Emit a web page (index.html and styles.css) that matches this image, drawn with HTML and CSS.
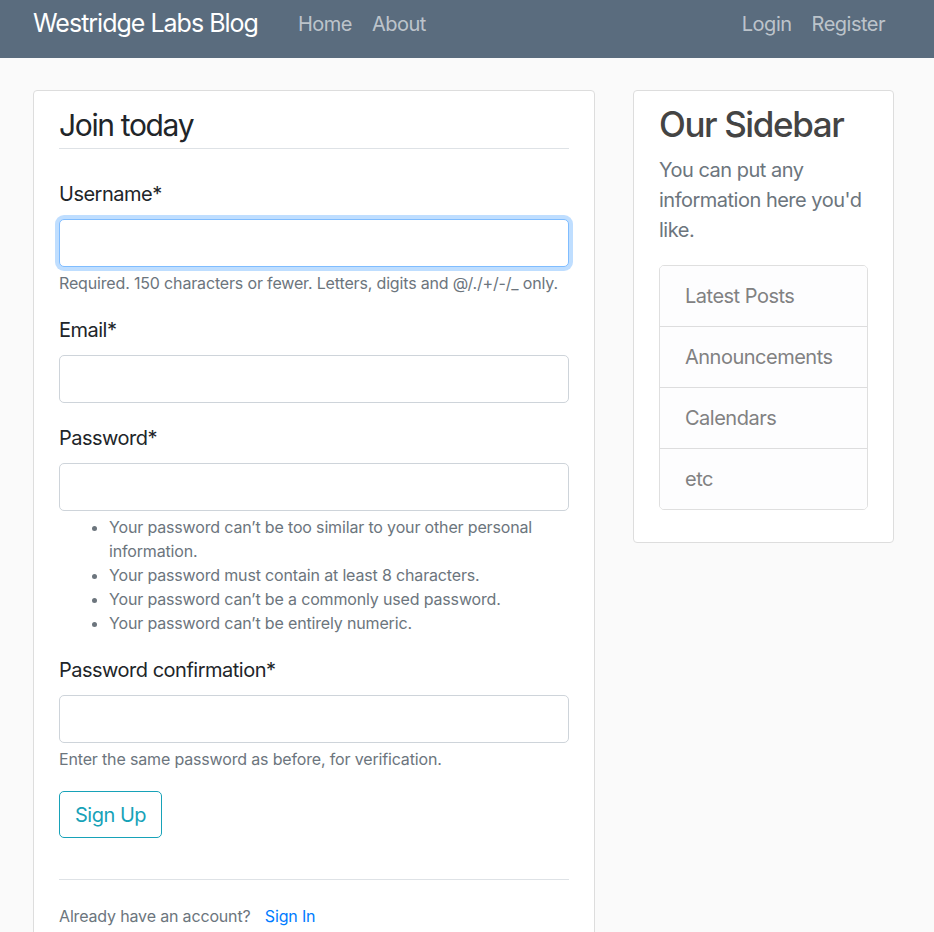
FILE: index.html
```html
<!DOCTYPE html>
<html lang="en">
<head>
<meta charset="utf-8">
<title>Westridge Labs Blog</title>
<link rel="stylesheet" href="styles.css">
</head>
<body>
<header class="navbar">
  <div class="nav-inner">
    <a class="brand" href="#">Westridge Labs Blog</a>
    <nav class="nav-left">
      <a class="nav-link" href="#">Home</a>
      <a class="nav-link" href="#">About</a>
    </nav>
    <nav class="nav-right">
      <a class="nav-link" href="#">Login</a>
      <a class="nav-link" href="#">Register</a>
    </nav>
  </div>
</header>
<main class="container">
  <div class="main-col">
    <section class="content-section">
      <form class="form">
        <fieldset class="fieldset">
          <legend class="legend">Join today</legend>
          <div class="form-group">
            <label class="label" for="u">Username*</label>
            <input class="form-control focused" id="u" type="text">
            <small class="help">Required. 150 characters or fewer. Letters, digits and @/./+/-/_ only.</small>
          </div>
          <div class="form-group">
            <label class="label" for="e">Email*</label>
            <input class="form-control" id="e" type="email">
          </div>
          <div class="form-group">
            <label class="label" for="p1">Password*</label>
            <input class="form-control" id="p1" type="password">
            <small class="help">
              <ul class="help-list">
                <li>Your password can’t be too similar to your other personal information.</li>
                <li>Your password must contain at least 8 characters.</li>
                <li>Your password can’t be a commonly used password.</li>
                <li>Your password can’t be entirely numeric.</li>
              </ul>
            </small>
          </div>
          <div class="form-group">
            <label class="label" for="p2">Password confirmation*</label>
            <input class="form-control" id="p2" type="password">
            <small class="help">Enter the same password as before, for verification.</small>
          </div>
        </fieldset>
        <div class="form-actions">
          <button class="btn-outline-info" type="button">Sign Up</button>
        </div>
      </form>
      <div class="account-row">
        <small class="muted-small">Already have an account? <a class="signin" href="#">Sign In</a></small>
      </div>
    </section>
  </div>
  <aside class="side-col">
    <section class="content-section sidebar">
      <h3 class="side-title">Our Sidebar</h3>
      <p class="side-text">You can put any information here you'd like.</p>
      <ul class="list-group">
        <li class="list-item">Latest Posts</li>
        <li class="list-item">Announcements</li>
        <li class="list-item">Calendars</li>
        <li class="list-item">etc</li>
      </ul>
    </section>
  </aside>
</main>
</body>
</html>
```
FILE: styles.css
```css
* { box-sizing: border-box; }
html, body { margin: 0; padding: 0; }
body {
  background: #fafafa;
  color: #333333;
  font-family: Inter, "Noto Sans", "Liberation Sans", sans-serif;
  font-size: 20px;
  line-height: 1.5;
  letter-spacing: -0.025em;
}
a { text-decoration: none; }

.navbar {
  background: #5a6c7e;
  height: 58px;
}
.nav-inner {
  display: flex;
  align-items: center;
  height: 58px;
  padding-left: 33px;
  padding-right: 39px;
}
.brand {
  color: #ffffff;
  font-size: 25px;
  line-height: 1.5;
  letter-spacing: -0.04em;
  margin-right: 30px;
  margin-top: -10px;
}
.nav-left, .nav-right { display: flex; margin-top: -10px; }
.nav-right { margin-left: auto; }
.nav-link {
  color: rgba(255, 255, 255, 0.62);
  font-size: 20px;
  padding: 0 10px;
}

.container {
  display: flex;
  align-items: flex-start;
  gap: 38px;
  padding-left: 33px;
  padding-top: 32px;
}
.main-col { width: 562px; flex: none; }
.side-col { width: 261px; flex: none; }

.content-section {
  background: #ffffff;
  border: 1px solid #dddddd;
  border-radius: 4px;
  padding: 12px 25px;
  margin-bottom: 25px;
}

.form { margin: 0; }
.fieldset { border: 0; margin: 0; padding: 0; min-width: 0; }
.legend {
  display: block;
  width: 100%;
  padding: 0;
  font-size: 30px;
  line-height: 45px;
  letter-spacing: -0.045em;
  color: #212529;
  border-bottom: 1px solid #dee2e6;
  margin-bottom: 30px;
}
.form-group { margin-bottom: 20px; }
.form-actions { margin-bottom: 41px; }
.label {
  display: inline-block;
  margin-bottom: 10px;
  color: #212529;
}
.form-control {
  display: block;
  width: 100%;
  height: 48px;
  padding: 7.5px 15px;
  font: inherit;
  color: #495057;
  background: #ffffff;
  border: 1px solid #ced4da;
  border-radius: 5px;
  outline: none;
}
.form-control.focused {
  border-color: #80bdff;
  box-shadow: 0 0 0 4px rgba(0, 123, 255, 0.25);
}
.help {
  display: block;
  margin-top: 4px;
  font-size: 16px;
  line-height: 24px;
  letter-spacing: -0.01em;
  color: #6c757d;
}
.help-list {
  margin: 0;
  padding-left: 50px;
}
.btn-outline-info {
  font: inherit;
  letter-spacing: -0.025em;
  color: #17a2b8;
  background: transparent;
  border: 1px solid #17a2b8;
  border-radius: 5px;
  padding: 7.5px 15px;
  line-height: 30px;
  cursor: pointer;
}
.account-row {
  border-top: 1px solid #dee2e6;
  padding-top: 20px;
}
.muted-small { font-size: 16px; letter-spacing: -0.01em; color: #6c757d; }
.signin { color: #007bff; margin-left: 10px; }

.side-title {
  margin: 0 0 10px;
  font-size: 35px;
  line-height: 42px;
  font-weight: 500;
  letter-spacing: -0.04em;
  color: #444444;
}
.side-text {
  margin: 0 0 20px;
  color: #6c757d;
}
.list-group {
  list-style: none;
  margin: 0 0 20px;
  padding: 0;
  border: 1px solid rgba(0, 0, 0, 0.125);
  border-radius: 5px;
  overflow: hidden;
}
.list-item {
  background: #fdfdfe;
  color: #818182;
  padding: 15px 25px;
  line-height: 30px;
  border-top: 1px solid rgba(0, 0, 0, 0.125);
}
.list-item:first-child { border-top: 0; }
```
